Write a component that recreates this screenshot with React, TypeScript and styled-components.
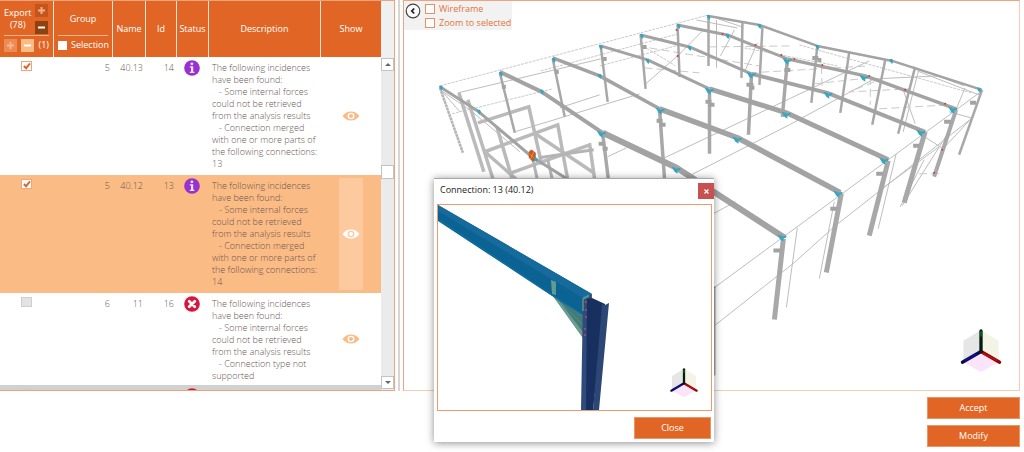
import React from "react";
import styled, { createGlobalStyle } from "styled-components";

const orange = "#e16626";
const orangeLine = "#f0a47d";
const orangeSoft = "#f6cdb8";
const peach = "#fbbb84";

const GlobalStyle = createGlobalStyle`
  *, *::before, *::after { box-sizing: border-box; }
  body { margin: 0; background: #fff; }
  body, button, input { font-family: "Open Sans", "Noto Sans", sans-serif; font-size: 9px; line-height: 12px; }
  button { padding: 0; border: 0; cursor: pointer; }
`;

const Page = styled.div`
  height: 100vh;
  min-height: 320px;
  display: flex;
  flex-direction: column;
  padding-right: 4px;
  overflow: hidden;
`;

const Workspace = styled.main`
  flex: 1;
  min-height: 0;
  display: flex;
`;

const ListPanel = styled.section`
  flex: 0 0 395px;
  display: flex;
  border: 1px solid ${orangeLine};
  border-left: 0;
  overflow: hidden;
`;

const TableArea = styled.div`
  flex: 1;
  overflow: hidden;
`;

const IncidenceTable = styled.table`
  width: 100%;
  table-layout: fixed;
  border-collapse: separate;
  border-spacing: 0;
`;

const Column = styled.col<{ $width: number }>`
  width: ${(p) => p.$width}px;
`;

const HeadCell = styled.th<{ $split?: boolean }>`
  height: 56px;
  padding: ${(p) => (p.$split ? "2px 4px 3px" : "0")};
  background: ${orange};
  color: #fff;
  font-weight: 400;
  text-align: center;
  vertical-align: ${(p) => (p.$split ? "top" : "middle")};
  border-right: 1px solid #fbe4d8;
  &:last-child { border-right: 0; }
`;

const HeadTop = styled.div<{ $center?: boolean }>`
  height: 33px;
  display: flex;
  align-items: center;
  justify-content: ${(p) => (p.$center ? "center" : "space-between")};
  border-bottom: 1px solid #f3b591;
`;

const HeadBottom = styled.div`
  height: 18px;
  display: flex;
  align-items: center;
  justify-content: space-between;
`;

const ButtonStack = styled.div`
  display: flex;
  flex-direction: column;
  gap: 4px;
  padding-right: 1px;
`;

const SquareButton = styled.button<{ $bg: string; $fg: string }>`
  width: 13px;
  height: 13px;
  display: grid;
  place-items: center;
  background: ${(p) => p.$bg};
  color: ${(p) => p.$fg};
`;

const SelectionLabel = styled.label`
  display: flex;
  align-items: center;
  gap: 4px;
`;

const PlainBox = styled.input`
  appearance: none;
  width: 9px;
  height: 9px;
  margin: 0;
  background: #fff;
`;

const Row = styled.tr<{ $tone?: "selected" | "muted"; $height?: number }>`
  height: ${(p) => (p.$height ? `${p.$height}px` : "auto")};
  background: ${(p) => (p.$tone === "selected" ? peach : p.$tone === "muted" ? "#d1d1d1" : "#fff")};
`;

const Cell = styled.td<{ $align?: "right" | "center" }>`
  height: 1px;
  padding: 5px 3px 3px;
  vertical-align: top;
  text-align: ${(p) => p.$align ?? "left"};
  color: #6a5854;
  font-weight: 300;
  white-space: pre-wrap;
`;

const IconCell = styled(Cell)`
  padding: 3px 0 0 7px;
  svg { display: block; }
`;

const CheckCell = styled(Cell)`
  padding: 4px 0 0 21px;
`;

const ShowCell = styled(Cell)`
  padding: 3px 18px;
`;

const ShowButton = styled.button<{ $active?: boolean }>`
  width: 24px;
  height: 100%;
  min-height: 20px;
  display: grid;
  place-items: center;
  background: ${(p) => (p.$active ? "#fdc99f" : "transparent")};
  color: ${(p) => (p.$active ? "#fff" : peach)};
`;

const CheckBox = styled.input`
  appearance: none;
  display: block;
  width: 11px;
  height: 10px;
  margin: 0;
  border: 1px solid ${orangeLine};
  background: #fff;
  &:checked::after {
    content: "";
    display: block;
    width: 4px;
    height: 7px;
    margin: 0 0 0 3px;
    border: solid ${orange};
    border-width: 0 2px 2px 0;
    transform: rotate(40deg);
  }
  &:disabled { border-color: #cfcfcf; background: #e3e3e3; }
`;

const ScrollColumn = styled.div`
  flex: 0 0 13px;
  display: flex;
  flex-direction: column;
  background: #ebebeb;
  padding-bottom: 1px;
`;

const ScrollCorner = styled.div`
  flex: 0 0 57px;
  background: #f0f0f0;
`;

const ScrollButton = styled.button`
  flex: 0 0 13px;
  display: grid;
  place-items: center;
  background: #fff;
  border: 1px solid #c3c3c3;
`;

const ScrollTrack = styled.div`
  flex: 1;
  display: flex;
  flex-direction: column;
`;

const TrackSpace = styled.div<{ $grow: number }>`
  flex: ${(p) => p.$grow} 0 0;
`;

const ScrollThumb = styled.div`
  flex: 0 0 14px;
  background: #fff;
  border: 1px solid #c3c3c3;
`;

const Splitter = styled.div`
  flex: 0 0 2px;
  margin: 0 3px;
  background: #d6d6d6;
`;

const Viewport = styled.section`
  flex: 1;
  min-width: 0;
  position: relative;
  border: 1px solid ${orangeSoft};
  border-top-color: ${orangeLine};
  border-left-color: ${orangeLine};
  overflow: hidden;
`;

const Scene = styled.svg`
  display: block;
  width: 100%;
  height: 100%;
`;

const ViewOptions = styled.div`
  position: absolute;
  top: 0;
  left: 0;
  display: flex;
  gap: 4px;
  padding: 2px 1px 1px;
  background: #f2f2f2;
`;

const BackButton = styled.button`
  width: 16px;
  height: 16px;
  background: transparent;
  svg { display: block; }
`;

const OptionList = styled.div`
  display: flex;
  flex-direction: column;
  gap: 2px;
`;

const Option = styled.label`
  display: flex;
  align-items: center;
  gap: 4px;
  color: #e5733b;
`;

const OptionBox = styled.input`
  appearance: none;
  width: 10px;
  height: 10px;
  margin: 0;
  border: 1px solid #ee8f61;
  background: #fff;
`;

const SceneAxes = styled.div<{ $right: number; $bottom: number }>`
  position: absolute;
  right: ${(p) => p.$right}px;
  bottom: ${(p) => p.$bottom}px;
  svg { display: block; }
`;

const Footer = styled.footer`
  display: flex;
  flex-direction: column;
  align-items: flex-end;
  gap: 6px;
  padding: 6px 0 5px;
`;

const ActionButton = styled.button<{ $width: number }>`
  width: ${(p) => p.$width}px;
  height: 22px;
  background: ${orange};
  border: 1px solid #eb9465;
  color: #fff;
`;

const Dialog = styled.div`
  position: absolute;
  left: 434px;
  top: 178px;
  width: 280px;
  display: flex;
  flex-direction: column;
  background: #fff;
  border-top: 1px solid #a8a8a8;
  box-shadow: 0 1px 8px rgba(0, 0, 0, 0.45);
`;

const DialogHeader = styled.header`
  display: flex;
  align-items: flex-start;
  justify-content: space-between;
  padding: 4px 0 5px 6px;
`;

const DialogTitle = styled.h2`
  margin: 1px 0 0;
  font-size: 9px;
  line-height: 12px;
  font-weight: 400;
  color: #222;
`;

const DialogClose = styled.button`
  width: 16px;
  height: 16px;
  display: grid;
  place-items: center;
  background: #c75050;
`;

const DialogView = styled.div`
  position: relative;
  height: 207px;
  margin: 0 2px 0 3px;
  border: 1px solid #ee9a6f;
  overflow: hidden;
`;

const DialogFooter = styled.div`
  display: flex;
  justify-content: flex-end;
  padding: 6px 3px 3px;
`;

function Plus() {
  return (
    <svg width="7" height="7" viewBox="0 0 7 7" aria-hidden="true">
      <path d="M3.5 0v7M0 3.5h7" stroke="currentColor" strokeWidth="2" />
    </svg>
  );
}

function Minus() {
  return (
    <svg width="7" height="7" viewBox="0 0 7 7" aria-hidden="true">
      <path d="M0 3.5h7" stroke="currentColor" strokeWidth="2" />
    </svg>
  );
}

function StatusIcon({ kind }: { kind: "info" | "error" }) {
  return (
    <svg width="16" height="16" viewBox="0 0 16 16" role="img" aria-label={kind}>
      <circle cx="8" cy="8" r="7.8" fill={kind === "info" ? "#9932cc" : "#dc143c"} />
      {kind === "info" ? (
        <g fill="#f3e3fa">
          <circle cx="7.9" cy="3.8" r="1.4" />
          <path d="M5.800 6.200h3.400v5.600h1.200V13H5.800v-1.200H7V7.400H5.800z" />
        </g>
      ) : (
        <path d="M5.200 5.200l5.600 5.600M10.800 5.200l-5.600 5.600" stroke="#fff" strokeWidth="2.800" strokeLinecap="round" />
      )}
    </svg>
  );
}

function Eye() {
  return (
    <svg width="18" height="10" viewBox="0 0 18 10" aria-hidden="true">
      <path d="M.5 5C3 1.800 5.800.4 9 .4S15 1.800 17.500 5C15 8.200 12.200 9.600 9 9.600S3 8.200.5 5zM9 1.800a3.400 3.200 0 1 0 0 6.400a3.400 3.200 0 1 0 0-6.400z" fill="currentColor" fillRule="evenodd" />
      <circle cx="9" cy="5" r="2" fill="currentColor" />
    </svg>
  );
}

function Axes({ size }: { size: number }) {
  return (
    <svg width={size} height={size} viewBox="-22 -23 44 45" aria-hidden="true">
      <path d="M0 0V-22L-18-11V11z" fill="#e6e6e6" />
      <path d="M0 0V-22L18-11V11z" fill="#f3f3e6" />
      <path d="M0 0L18 11L0 21L-18 11z" fill="#fae4fa" />
      <g strokeWidth="3.4" strokeLinecap="round">
        <path d="M0 0L19 11" stroke="#8c0808" />
        <path d="M2 2L16 9" stroke="#c01010" strokeWidth="1.500" />
        <path d="M0 0L-19 11" stroke="#0a0a50" />
        <path d="M-5 3L-16 9" stroke="#1010a8" strokeWidth="1.500" />
        <path d="M0 0V-21" stroke="#061c0a" />
        <path d="M0-16V-20" stroke="#0f5a1c" strokeWidth="2" />
      </g>
    </svg>
  );
}

const darkBeams = [
  { w: 3, d: "M440 87L479 112L532 157L572 182" },
  { w: 4, d: "M500 72L542 92L603 133" },
  { w: 6, d: "M603 133L677 168L785 238" },
  { w: 3.5, d: "M553 58L600 76L660 109" },
  { w: 5.5, d: "M660 109L738 138L841 193" },
  { w: 3, d: "M601 46L648 60L710 89" },
  { w: 5, d: "M710 89L787 113L889 160" },
  { w: 3, d: "M641 35L690 47L752 74" },
  { w: 4, d: "M752 74L828 93L926 132" },
  { w: 3, d: "M678 25L728 35L788 59" },
  { w: 3.5, d: "M788 59L866 76L957 109" },
  { w: 2.5, d: "M709 16L760 25L818 46L893 61L983 90" },
];

const columns = [
  { w: 2.5, d: "M500 73L515 133M553 59L565 117M601 46L608 102M641 35L646 89M678 25L680 77M709 16V66" },
  { w: 3.5, d: "M603 134L610 190M660 110L665 180M710 90V154M752 75L749 135M788 60L783 117" },
  { w: 2.5, d: "M743 22L742 78M763 27L760 85M818 46L812 103M850 52L841 113M886 60L873 125M916 67L899 134" },
  { w: 2.5, d: "M983 90L960 155" },
  { w: 4, d: "M957 110L935 177" },
  { w: 5, d: "M926 132L905 203M889 161L870 236" },
  { w: 5, d: "M842 194L827 273M784 239L775 320" },
  { w: 2, d: "M715 289V376" },
];

const stubs = "M502 87h4M555 72h4M603 59h4M643 47h4M657 121h6M661 125h5M706 102h6M709 105h6M747 85h7M750 88h5M785 70h6M599 144h6M603 149h5M813 58h6M818 60h4M971 103h6M945 122h7M914 146h6M877 174h7M831 209h7M774 251h7";

const lightFrame = "M459 93L484 172M468 100L494 182M478 123L529 107L542 165M485 152L558 125L568 180M512 173L590 145L595 180M485 152L517 180M534 133L594 173M497 127L512 178";

const joints: [number, number, number][] = [
  [441, 88, 0], [479, 112, 0], [501, 74, 0], [542, 92, 0], [554, 60, 0], [600, 76, 0], [601, 47, 0],
  [648, 61, 0], [642, 36, 0], [690, 48, 0], [679, 26, 0], [728, 36, 0], [709, 17, 0], [760, 26, 0],
  [602, 133, 1], [661, 110, 1], [710, 90, 1], [752, 74, 1], [788, 60, 1], [818, 47, 0], [677, 169, 1],
  [738, 139, 1], [787, 114, 1], [829, 94, 1], [865, 77, 1], [892, 61, 0], [783, 237, 1], [839, 193, 1],
  [885, 160, 1], [922, 132, 1], [954, 109, 1], [980, 90, 0],
];

const redMarks = [[677, 30], [678, 56], [723, 34], [756, 45], [782, 55], [795, 59], [823, 65], [870, 76], [906, 90], [946, 104], [943, 150], [935, 173]];

function StructureScene() {
  return (
    <Scene viewBox="404 1 616 389" preserveAspectRatio="xMinYMin meet" role="img" aria-label="Structure">
      <g fill="none">
        <g stroke="#bdbdbd" strokeWidth="1">
          <path d="M440 86L709 15M452 114L553 89M541 71L678 34M600 66L680 45M640 44L676 66M745 48L838 66M800 45L972 93" strokeDasharray="3 1" stroke="#c9c9c9" />
          <path d="M458 93L601 59M443 92L470 110L520 152M440 89L460 112M515 132L640 94M560 108L600 95M645 85L678 56L704 30" />
          <path d="M608 157L627 148M663 159L790 99L870 61M690 176L790 125L875 79L940 76M714 214L736 202M715 288L983 91M714 327L795 263L835 227L972 119" />
          <path d="M798 228L787 308M835 202L820 279M897 154L879 229M925 160L901 207M949 133L903 206M919 72L904 132M904 90L916 124M966 88L950 126M914 67L965 86M719 19L743 27M717 20V68M918 71L980 95M950 112L972 118M927 138L944 149L970 121M880 191L940 147" />
          <path d="M650 48L760 66M645 68L700 73M710 47L790 46M750 73L870 66M875 82L850 92L910 89M880 109L950 105M815 84L870 78M920 174H940M822 66L823 90M871 77V105" strokeDasharray="8 4" stroke="#c9c9c9" />
          <path d="M721 56L735 30M746 70L758 43M697 20L738 28" />
        </g>
        <path d="M440 88L463 153" stroke="#b5b5b5" strokeWidth="2.500" strokeDasharray="3 .5" />
        <path d={lightFrame} stroke="#bababa" strokeWidth="3.500" />
        <path d="M539 158L594 150M531 150L538 182M548 160L553 182" stroke="#b4b4b4" strokeWidth="3" />
        <g stroke="#a8a8a8">
          {columns.map((c) => (
            <path key={c.d} d={c.d} strokeWidth={c.w} />
          ))}
        </g>
        <g stroke="#a3a3a3" strokeLinejoin="round">
          {darkBeams.map((b) => (
            <path key={b.d} d={b.d} strokeWidth={b.w} />
          ))}
        </g>
        <path d={stubs} stroke="#a3a3a3" strokeWidth="4" />
      </g>
      <g fill="#38a6bf">
        {joints.map(([x, y, large]) => (
          <path
            key={`${x}-${y}`}
            d={large ? `M${x - 5} ${y - 2}l4 1l1 1l4-1v2l-3 1v3l-3-2z` : `M${x - 2} ${y - 2}h3l1 2l-1 3l-2-2z`}
          />
        ))}
        <path d="M714 287h2v2h-2z" />
      </g>
      <g fill="#d23a3a">
        {redMarks.map(([x, y]) => (
          <circle key={x} cx={x} cy={y} r="1" />
        ))}
      </g>
      <path d="M529 152l3-2l4 3v6l-3 3l-4-4z" fill="#c65a1e" />
      <path d="M530 154l4 4M534 152l-3 7" stroke="#e9874a" strokeWidth="1" />
      <path d="M535 157l3 2l-1 3l-3-1z" fill="#38a6bf" />
    </Scene>
  );
}

function ConnectionScene() {
  const bolts = [[148, 97], [148, 105], [148, 112], [147, 124], [147, 130]];
  return (
    <Scene viewBox="0 0 273 205" preserveAspectRatio="xMinYMin meet" role="img" aria-label="Connection detail">
      <path d="M115 91L145 111V133z" fill="#467a76" />
      <path d="M115 91L145 133V127L119 93z" fill="#6b9d90" />
      <path d="M119 94L145 120" stroke="#3f9486" strokeWidth="1" />
      <path d="M0 0L154 89L145 94V111L114 91L0 16z" fill="#0b6394" />
      <path d="M0 0L154 89L145 93L0 6z" fill="#176b9c" />
      <path d="M0 14L114 90L145 110" fill="none" stroke="#0f74a8" strokeWidth="1" />
      <path d="M113 75l5 2v13l-4-1z" fill="#6b9a88" />
      <path d="M117 77v13" stroke="#37a6a8" strokeWidth="1" />
      <path d="M145 93L154 89L149 205H143z" fill="#2f4b7c" />
      <path d="M149 94L154 93L167 99L155 205H148z" fill="#17305f" />
      <path d="M164 99L167 100L171 98L161 205H155z" fill="#2c4675" />
      <path d="M145 106V94L151 91" fill="none" stroke="#6a8f78" strokeWidth="1.500" />
      <path d="M145 93l6-3" stroke="#24b0a8" strokeWidth="1" />
      {bolts.map(([x, y]) => (
        <circle key={y} cx={x} cy={y} r="1.100" fill="#b8446c" />
      ))}
    </Scene>
  );
}

type Incidence = {
  id: number;
  group: number;
  name: string;
  checked: boolean;
  kind: "info" | "error";
  height?: number;
  selected?: boolean;
  text: string;
};

const intro = "The following incidences have been found:\n";
const retrieved = "   - Some internal forces could not be retrieved from the analysis results\n";
const merged = "   - Connection merged with one or more parts of the following connections: ";

const incidences: Incidence[] = [
  { id: 14, group: 5, name: "40.13", checked: true, kind: "info", height: 118, text: intro + retrieved + merged + "13" },
  { id: 13, group: 5, name: "40.12", checked: true, kind: "info", height: 118, selected: true, text: intro + retrieved + merged + "14" },
  { id: 16, group: 6, name: "11", checked: false, kind: "error", text: intro + retrieved + "   - Connection type not supported" },
];

const columnWidths = [54, 59, 33, 31, 32, 112, 60];

export default function App() {
  return (
    <>
      <GlobalStyle />
      <Page>
        <Workspace>
          <ListPanel>
            <TableArea>
              <IncidenceTable>
                <colgroup>
                  {columnWidths.map((w, i) => (
                    <Column key={i} $width={w} />
                  ))}
                </colgroup>
                <thead>
                  <tr>
                    <HeadCell $split>
                      <HeadTop>
                        <span>Export<br />(78)</span>
                        <ButtonStack>
                          <SquareButton $bg="#c4551c" $fg="#f0b08c" aria-label="Export all"><Plus /></SquareButton>
                          <SquareButton $bg="#8d420f" $fg="#fff" aria-label="Export none"><Minus /></SquareButton>
                        </ButtonStack>
                      </HeadTop>
                      <HeadBottom>
                        <SquareButton $bg="#ec8b54" $fg="#f7b68f" aria-label="Export selected"><Plus /></SquareButton>
                        <SquareButton $bg={peach} $fg="#fff" aria-label="Skip selected"><Minus /></SquareButton>
                        <span>(1)</span>
                      </HeadBottom>
                    </HeadCell>
                    <HeadCell $split>
                      <HeadTop $center>Group</HeadTop>
                      <HeadBottom>
                        <SelectionLabel><PlainBox type="checkbox" />Selection</SelectionLabel>
                      </HeadBottom>
                    </HeadCell>
                    <HeadCell>Name</HeadCell>
                    <HeadCell>Id</HeadCell>
                    <HeadCell>Status</HeadCell>
                    <HeadCell>Description</HeadCell>
                    <HeadCell>Show</HeadCell>
                  </tr>
                </thead>
                <tbody>
                  {incidences.map((row) => (
                    <Row key={row.id} $height={row.height} $tone={row.selected ? "selected" : undefined}>
                      <CheckCell>
                        <CheckBox type="checkbox" defaultChecked={row.checked} disabled={!row.checked} aria-label={`Export ${row.id}`} />
                      </CheckCell>
                      <Cell $align="right">{row.group}</Cell>
                      <Cell $align="right">{row.name}</Cell>
                      <Cell $align="right">{row.id}</Cell>
                      <IconCell><StatusIcon kind={row.kind} /></IconCell>
                      <Cell>{row.text}</Cell>
                      <ShowCell>
                        <ShowButton $active={row.selected} aria-label={`Show ${row.id}`}><Eye /></ShowButton>
                      </ShowCell>
                    </Row>
                  ))}
                  <Row $tone="muted">
                    <CheckCell><CheckBox type="checkbox" disabled aria-label="Export next" /></CheckCell>
                    <Cell /><Cell /><Cell />
                    <IconCell><StatusIcon kind="error" /></IconCell>
                    <Cell /><Cell />
                  </Row>
                </tbody>
              </IncidenceTable>
            </TableArea>
            <ScrollColumn>
              <ScrollCorner />
              <ScrollButton aria-label="Scroll up">
                <svg width="6" height="3" viewBox="0 0 6 3"><path d="M0 3l3-3l3 3z" fill="#666" /></svg>
              </ScrollButton>
              <ScrollTrack>
                <TrackSpace $grow={94} />
                <ScrollThumb />
                <TrackSpace $grow={198} />
              </ScrollTrack>
              <ScrollButton aria-label="Scroll down">
                <svg width="6" height="3" viewBox="0 0 6 3"><path d="M0 0l3 3l3-3z" fill="#666" /></svg>
              </ScrollButton>
            </ScrollColumn>
          </ListPanel>
          <Splitter />
          <Viewport>
            <StructureScene />
            <ViewOptions>
              <BackButton aria-label="Back">
                <svg width="16" height="16" viewBox="0 0 16 16">
                  <circle cx="8" cy="8" r="6.800" fill="#fafafa" stroke="#444" strokeWidth="1.200" />
                  <path d="M9.200 5.500L6.800 8L9.200 10.500" fill="none" stroke="#222" strokeWidth="1.800" />
                </svg>
              </BackButton>
              <OptionList>
                <Option><OptionBox type="checkbox" />Wireframe</Option>
                <Option><OptionBox type="checkbox" />Zoom to selected</Option>
              </OptionList>
            </ViewOptions>
            <SceneAxes $right={16} $bottom={17}><Axes size={44} /></SceneAxes>
          </Viewport>
        </Workspace>
        <Footer>
          <ActionButton $width={93}>Accept</ActionButton>
          <ActionButton $width={93}>Modify</ActionButton>
        </Footer>
      </Page>
      <Dialog role="dialog" aria-labelledby="dialog-title">
        <DialogHeader>
          <DialogTitle id="dialog-title">Connection: 13 (40.12)</DialogTitle>
          <DialogClose aria-label="Close dialog">
            <svg width="5" height="5" viewBox="0 0 5 5"><path d="M.5.5l4 4M4.500.5l-4 4" stroke="#fff" strokeWidth="1.200" /></svg>
          </DialogClose>
        </DialogHeader>
        <DialogView>
          <ConnectionScene />
          <SceneAxes $right={12} $bottom={12}><Axes size={30} /></SceneAxes>
        </DialogView>
        <DialogFooter>
          <ActionButton $width={77}>Close</ActionButton>
        </DialogFooter>
      </Dialog>
    </>
  );
}
